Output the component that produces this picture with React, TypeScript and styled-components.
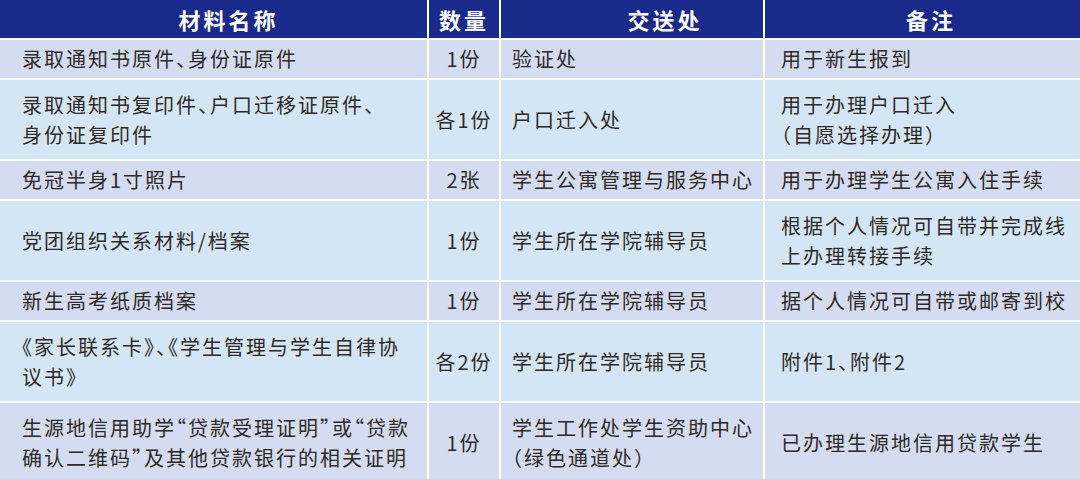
import React from "react";
import styled, { createGlobalStyle } from "styled-components";

const GlobalStyle = createGlobalStyle`
  html,
  body {
    margin: 0;
    padding: 0;
    background: #fff;
    overflow: hidden;
  }
  body {
    font-family: "Noto Sans CJK SC", "Noto Sans", sans-serif;
  }
`;

const Table = styled.div`
  width: 1080px;
  display: flex;
  flex-direction: column;
  gap: 2px;
  background: #fff;
`;

const Row = styled.div<{ $tall?: boolean }>`
  display: grid;
  grid-template-columns: 427px 70px 262px 315px;
  column-gap: 2px;
  height: ${p => (p.$tall ? 79 : 38)}px;
`;

const Head = styled.div<{ $shift?: number }>`
  display: flex;
  align-items: center;
  justify-content: center;
  padding-left: ${p => p.$shift || 0}px;
  background: #1a2a8a;
  color: #fff;
  font-size: 22px;
  font-weight: 700;
  letter-spacing: 3px;
`;

const Cell = styled.div<{ $odd?: boolean; $center?: boolean; $pad?: number }>`
  display: flex;
  flex-direction: column;
  justify-content: center;
  align-items: ${p => (p.$center ? "center" : "flex-start")};
  padding-left: ${p => (p.$center ? 0 : p.$pad || 0)}px;
  background: ${p => (p.$odd ? "#d3dcf0" : "#d4e6f5")};
  color: #2f2a27;
  font-size: 20px;
  line-height: 30px;
  letter-spacing: 2px;
  white-space: nowrap;
`;

// half-width punctuation, as the typeset original squeezes it
const Punct = styled.span`
  font-feature-settings: "halt";
`;

const PUNCT = /([、“”《》（）]+)/;

function fmt(text: string) {
  return text
    .split(PUNCT)
    .map((part, i) =>
      PUNCT.test(part) ? <Punct key={i}>{part}</Punct> : part
    );
}

interface Item {
  name: string[];
  qty: string;
  to: string[];
  note: string[];
}

const items: Item[] = [
  {
    name: ["录取通知书原件、身份证原件"],
    qty: "1份",
    to: ["验证处"],
    note: ["用于新生报到"]
  },
  {
    name: ["录取通知书复印件、户口迁移证原件、", "身份证复印件"],
    qty: "各1份",
    to: ["户口迁入处"],
    note: ["用于办理户口迁入", "（自愿选择办理）"]
  },
  {
    name: ["免冠半身1寸照片"],
    qty: "2张",
    to: ["学生公寓管理与服务中心"],
    note: ["用于办理学生公寓入住手续"]
  },
  {
    name: ["党团组织关系材料/档案"],
    qty: "1份",
    to: ["学生所在学院辅导员"],
    note: ["根据个人情况可自带并完成线", "上办理转接手续"]
  },
  {
    name: ["新生高考纸质档案"],
    qty: "1份",
    to: ["学生所在学院辅导员"],
    note: ["据个人情况可自带或邮寄到校"]
  },
  {
    name: ["《家长联系卡》、《学生管理与学生自律协", "议书》"],
    qty: "各2份",
    to: ["学生所在学院辅导员"],
    note: ["附件1、附件2"]
  },
  {
    name: ["生源地信用助学“贷款受理证明”或“贷款", "确认二维码”及其他贷款银行的相关证明"],
    qty: "1份",
    to: ["学生工作处学生资助中心", "（绿色通道处）"],
    note: ["已办理生源地信用贷款学生"]
  }
];

function Lines({ list }: { list: string[] }) {
  return (
    <>
      {list.map((line, i) => (
        <div key={i}>{fmt(line)}</div>
      ))}
    </>
  );
}

export default function App() {
  return (
    <>
      <GlobalStyle />
      <Table>
        <Row>
          <Head $shift={30}>材料名称</Head>
          <Head>数量</Head>
          <Head $shift={66}>交送处</Head>
          <Head $shift={17}>备注</Head>
        </Row>
        {items.map((item, i) => {
          const odd = i % 2 === 0;
          const tall = [item.name, item.to, item.note].some(l => l.length > 1);
          return (
            <Row key={i} $tall={tall}>
              <Cell $odd={odd} $pad={22}>
                <Lines list={item.name} />
              </Cell>
              <Cell $odd={odd} $center>
                {item.qty}
              </Cell>
              <Cell $odd={odd} $pad={11}>
                <Lines list={item.to} />
              </Cell>
              <Cell $odd={odd} $pad={16}>
                <Lines list={item.note} />
              </Cell>
            </Row>
          );
        })}
      </Table>
    </>
  );
}
